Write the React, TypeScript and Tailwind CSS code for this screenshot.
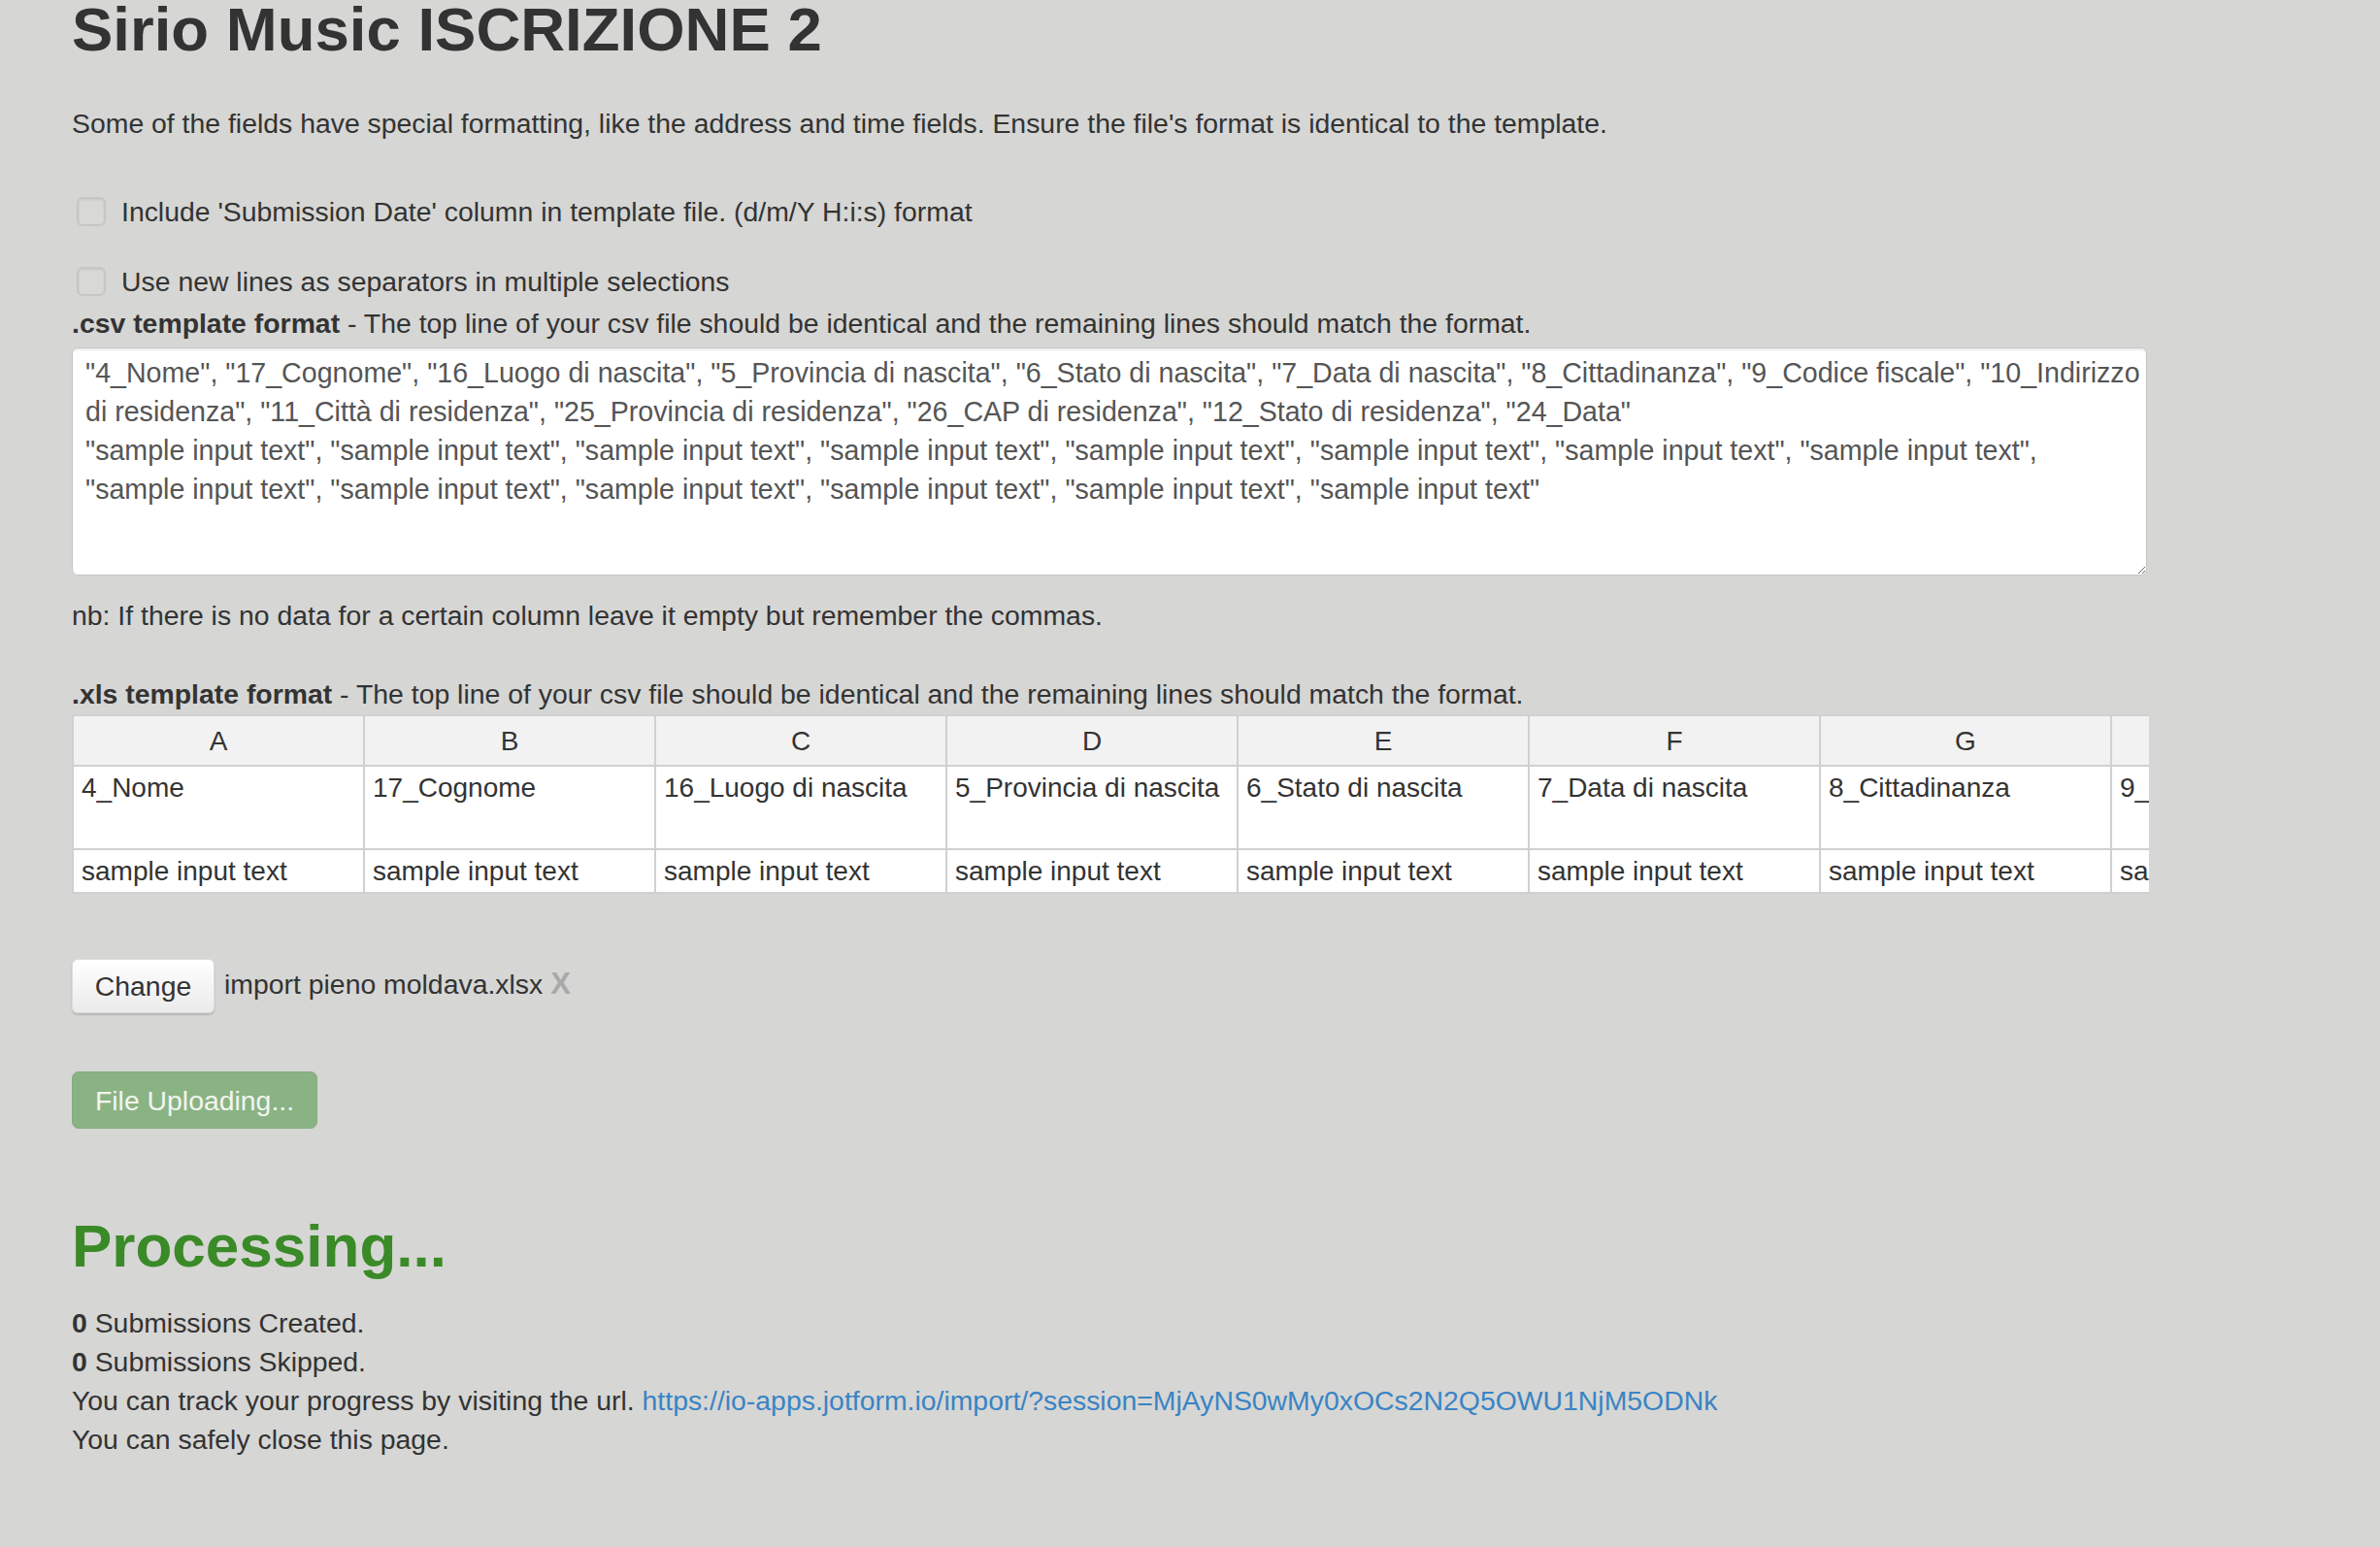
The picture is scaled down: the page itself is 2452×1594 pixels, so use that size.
import React from "react";

const fields = [
  "4_Nome",
  "17_Cognome",
  "16_Luogo di nascita",
  "5_Provincia di nascita",
  "6_Stato di nascita",
  "7_Data di nascita",
  "8_Cittadinanza",
  "9_Codice fiscale",
  "10_Indirizzo di residenza",
  "11_Città di residenza",
  "25_Provincia di residenza",
  "26_CAP di residenza",
  "12_Stato di residenza",
  "24_Data",
];

const letters = "ABCDEFGHIJKLMN".split("");

const csvText = [
  '"4_Nome", "17_Cognome", "16_Luogo di nascita", "5_Provincia di nascita", "6_Stato di nascita", "7_Data di nascita", "8_Cittadinanza", "9_Codice fiscale", "10_Indirizzo',
  'di residenza", "11_Città di residenza", "25_Provincia di residenza", "26_CAP di residenza", "12_Stato di residenza", "24_Data"',
  '"sample input text", "sample input text", "sample input text", "sample input text", "sample input text", "sample input text", "sample input text", "sample input text",',
  '"sample input text", "sample input text", "sample input text", "sample input text", "sample input text", "sample input text"',
].join("\n");

function Check({ label }: { label: string }) {
  return (
    <label className="flex items-center h-[40px]">
      <span className="ml-[5px] w-[30px] h-[30px] rounded-[6px] border-2 border-[#c6c6c4] shadow-[inset_0_1px_2px_rgba(0,0,0,0.08)] bg-[#d8d8d6]" />
      <span className="ml-[16px]">{label}</span>
    </label>
  );
}

export default function App() {
  return (
    <div className="min-h-[1594px] bg-[#d6d6d4] text-[#333] text-[28.4px] leading-[40px] font-['Liberation_Sans',Arial,sans-serif] pl-[74px] pr-[240px] overflow-hidden">
      <h1 className="text-[63.5px] leading-[60px] font-bold">Sirio Music ISCRIZIONE 2</h1>

      <p className="mt-[47px]">
        Some of the fields have special formatting, like the address and time fields. Ensure the file's
        format is identical to the template.
      </p>

      <div className="mt-[51px]">
        <Check label="Include 'Submission Date' column in template file. (d/m/Y H:i:s) format" />
      </div>
      <div className="mt-[32px]">
        <Check label="Use new lines as separators in multiple selections" />
      </div>

      <p className="mt-[3px]">
        <b>.csv template format</b> - The top line of your csv file should be identical and the remaining
        lines should match the format.
      </p>

      <textarea
        readOnly
        value={csvText}
        className="mt-[5px] block w-[2138px] h-[235px] whitespace-pre overflow-hidden bg-white border border-[#c6c6c6] rounded-[6px] shadow-[inset_0_2px_2px_rgba(0,0,0,0.075)] text-[#555] text-[28.6px] leading-[40px] pt-[5px] px-[13px] outline-none"
      />

      <p className="mt-[21px]">nb: If there is no data for a certain column leave it empty but remember the commas.</p>

      <p className="mt-[41px]">
        <b>.xls template format</b> - The top line of your csv file should be identical and the remaining
        lines should match the format.
      </p>

      <div className="mt-[1px] w-[2140px] overflow-hidden text-[28px]">
        <table className="table-fixed border-collapse">
          <tbody>
            <tr className="bg-[#f2f2f2]">
              {fields.map((_, i) => (
                <td
                  key={i}
                  className="w-[300px] min-w-[300px] border-2 border-[#d0d0d0] text-center pt-[6px] pb-[4px]"
                >
                  {letters[i]}
                </td>
              ))}
            </tr>
            <tr className="bg-white align-top">
              {fields.map((f) => (
                <td key={f} className="w-[300px] border-2 border-[#d0d0d0] px-[8px] pt-[2px] pb-[2px]">
                  {f}
                </td>
              ))}
            </tr>
            <tr className="bg-white">
              {fields.map((f) => (
                <td key={f} className="w-[300px] border-2 border-[#d0d0d0] px-[8px] pt-[2px] pb-[1px] whitespace-nowrap">
                  sample input text
                </td>
              ))}
            </tr>
          </tbody>
        </table>
      </div>

      <div className="mt-[67px] flex items-center">
        <button className="h-[56px] w-[147px] rounded-[6px] border border-[#dcdcdc] bg-gradient-to-b from-white to-[#ebebeb] shadow-[0_2px_2px_rgba(0,0,0,0.15)] text-[#333]">
          Change
        </button>
        <span className="ml-[10px] -mt-[4px]">import pieno moldava.xlsx</span>
        <span className="ml-[8px] -mt-[4px] text-[31px] font-black text-[#a9a9a9]">X</span>
      </div>

      <button
        disabled
        className="mt-[60px] block h-[59px] w-[253px] rounded-[7px] bg-[#8ab383] border border-[#84ad7d] text-[#f2f5ef]"
      >
        File Uploading...
      </button>

      <h2 className="mt-[87px] text-[62px] leading-[68px] font-bold text-[#3a8a27]">Processing...</h2>

      <div className="mt-[25px]">
        <div>
          <b>0</b> Submissions Created.
        </div>
        <div>
          <b>0</b> Submissions Skipped.
        </div>
        <div>
          You can track your progress by visiting the url.{" "}
          <a className="text-[#3a84c4]" href="#">
            https://io-apps.jotform.io/import/?session=MjAyNS0wMy0xOCs2N2Q5OWU1NjM5ODNk
          </a>
        </div>
        <div>You can safely close this page.</div>
      </div>
    </div>
  );
}
